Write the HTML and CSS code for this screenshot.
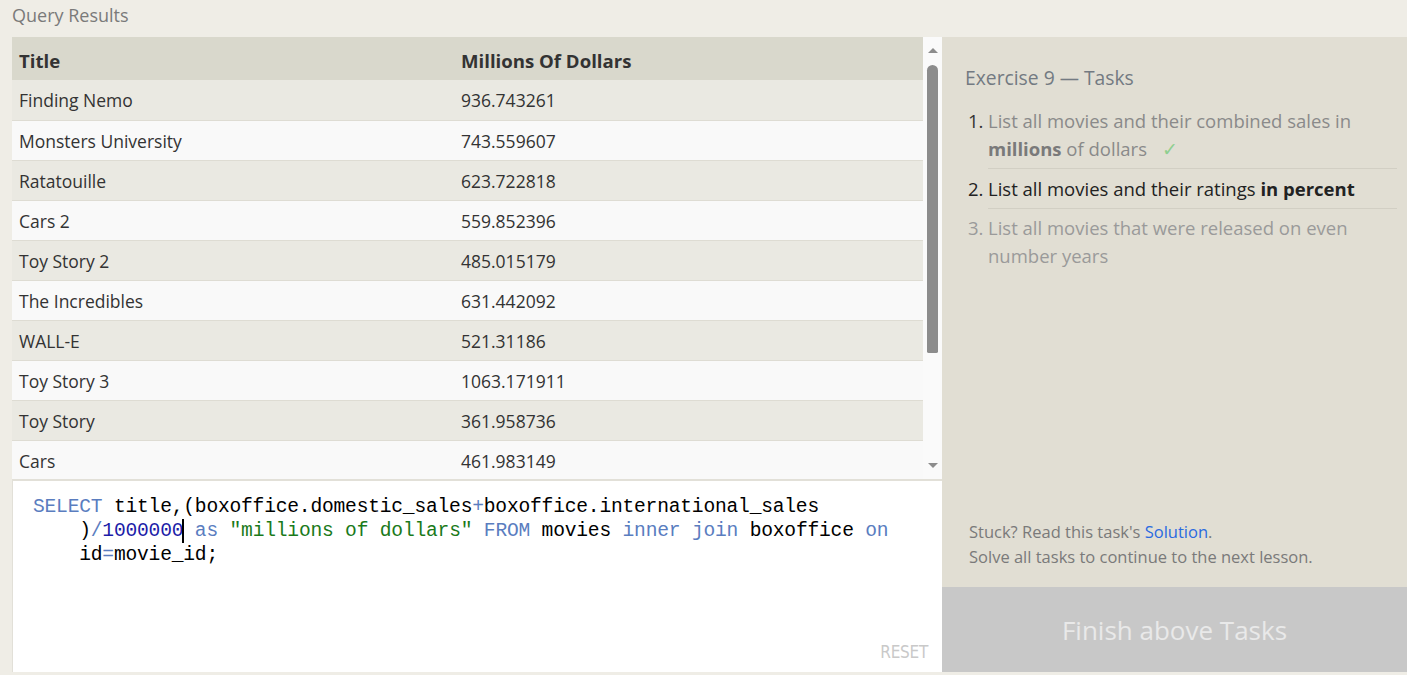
FILE: index.html
```html
<!DOCTYPE html>
<html>
<head>
<meta charset="utf-8">
<link rel="stylesheet" href="styles.css">
</head>
<body>
<div class="page">
  <div class="top-title">Query Results</div>
  <div class="main">
    <div class="left">
      <div class="results">
        <div class="table-wrap">
          <table class="results-table">
            <thead>
              <tr><th class="c1">Title</th><th>Millions Of Dollars</th></tr>
            </thead>
            <tbody>
              <tr><td>Finding Nemo</td><td>936.743261</td></tr>
              <tr><td>Monsters University</td><td>743.559607</td></tr>
              <tr><td>Ratatouille</td><td>623.722818</td></tr>
              <tr><td>Cars 2</td><td>559.852396</td></tr>
              <tr><td>Toy Story 2</td><td>485.015179</td></tr>
              <tr><td>The Incredibles</td><td>631.442092</td></tr>
              <tr><td>WALL-E</td><td>521.31186</td></tr>
              <tr><td>Toy Story 3</td><td>1063.171911</td></tr>
              <tr><td>Toy Story</td><td>361.958736</td></tr>
              <tr><td>Cars</td><td>461.983149</td></tr>
            </tbody>
          </table>
        </div>
        <div class="scrollbar">
          <div class="arrow up"></div>
          <div class="track"><div class="thumb"></div></div>
          <div class="arrow down"></div>
        </div>
      </div>
      <div class="editor">
        <div class="code"><span class="kw">SELECT</span> title,(boxoffice.domestic_sales<span class="op">+</span>boxoffice.international_sales
    )<span class="op">/</span><span class="num">1000000</span><span class="cursor"></span> <span class="kw">as</span> <span class="str">"millions of dollars"</span> <span class="kw">FROM</span> movies <span class="kw">inner</span> <span class="kw">join</span> boxoffice <span class="kw">on</span>
    id<span class="op">=</span>movie_id;</div>
        <div class="reset-row"><span class="reset">RESET</span></div>
      </div>
    </div>
    <div class="right">
      <div class="tasks">
        <h2 class="tasks-title">Exercise 9 — Tasks</h2>
        <ol class="task-list">
          <li class="task done"><span class="num-label">1.</span><span class="task-text">List all movies and their combined sales in <b>millions</b> of dollars <span class="check">✓</span></span></li>
          <li class="task current"><span class="num-label">2.</span><span class="task-text">List all movies and their ratings <b>in percent</b></span></li>
          <li class="task todo"><span class="num-label">3.</span><span class="task-text">List all movies that were released on even number years</span></li>
        </ol>
      </div>
      <div class="help">
        <p>Stuck? Read this task's <a class="link">Solution</a>.</p>
        <p>Solve all tasks to continue to the next lesson.</p>
      </div>
      <div class="finish">Finish above Tasks</div>
    </div>
  </div>
</div>
</body>
</html>
```
FILE: styles.css
```css
html, body {
  margin: 0;
  padding: 0;
}
body {
  background: #efede6;
  font-family: "Open Sans", "Noto Sans", sans-serif;
  color: #333;
  width: 1407px;
  height: 675px;
  overflow: hidden;
}
.page {
  display: flex;
  flex-direction: column;
  height: 675px;
}
.top-title {
  height: 37px;
  padding-left: 12px;
  font-size: 18px;
  line-height: 30px;
  color: #7a7a7a;
}
.main {
  display: flex;
  height: 635px;
  padding-left: 12px;
}
.left {
  width: 930px;
  display: flex;
  flex-direction: column;
}
.results {
  display: flex;
  height: 442px;
  border-bottom: 2px solid #e2e0d8;
  background: #fafafa;
}
.table-wrap {
  width: 911px;
  overflow: hidden;
}
.results-table {
  width: 100%;
  border-collapse: collapse;
  font-size: 17.5px;
}
.results-table th {
  background: #d9d8cc;
  text-align: left;
  height: 43px;
  padding: 4px 0 0 7px;
  box-sizing: border-box;
  font-weight: 700;
  font-size: 18.6px;
  color: #333;
}
.results-table th.c1 {
  width: 442px;
}
.results-table td {
  height: 40px;
  padding: 1px 0 0 7px;
  box-sizing: border-box;
  border-bottom: 1px solid #dedcd3;
  color: #333;
}
.results-table tbody tr:nth-child(odd) td {
  background: #eae9e2;
}
.results-table tbody tr:nth-child(even) td {
  background: #f9f9f9;
}
.scrollbar {
  width: 19px;
  background: #fafafa;
  display: flex;
  flex-direction: column;
  align-items: center;
}
.arrow {
  width: 0;
  height: 0;
  border-left: 5px solid transparent;
  border-right: 5px solid transparent;
}
.arrow.up {
  margin-top: 11px;
  border-bottom: 5px solid #8c8c8c;
}
.arrow.down {
  margin-bottom: 11px;
  border-top: 5px solid #8c8c8c;
}
.track {
  flex: 1;
  padding-top: 12px;
  width: 11px;
}
.thumb {
  width: 11px;
  height: 288px;
  background: #8c8c8c;
  border-radius: 6px 6px 2px 2px;
}
.editor {
  flex: 1;
  background: #fff;
  border-left: 1px solid #e2e0d8;
  display: flex;
  flex-direction: column;
}
.code {
  flex: 1;
  font-family: "Liberation Mono", monospace;
  font-size: 19.6px;
  letter-spacing: -0.2px;
  line-height: 24px;
  white-space: pre;
  padding: 14px 0 0 20px;
  color: #000;
}
.kw { color: #5a7dbf; }
.op { color: #5a7dbf; }
.num { color: #1c1ca8; }
.str { color: #1a7a1a; }
.cursor {
  display: inline-block;
  width: 2px;
  height: 24px;
  background: #000;
  vertical-align: top;
  margin-left: -1px;
  margin-right: -1px;
}
.reset-row {
  display: flex;
  justify-content: flex-end;
  padding: 0 14px 10px 0;
}
.reset {
  display: inline-block;
  font-family: "DejaVu Sans", sans-serif;
  font-size: 17px;
  color: #c9c9c9;
  transform: scaleX(0.9);
  transform-origin: right center;
  letter-spacing: -0.3px;
}
.right {
  width: 465px;
  background: #e1ded3;
  display: flex;
  flex-direction: column;
}
.tasks {
  flex: 1;
  padding: 26px 10px 0 23px;
}
.tasks-title {
  margin: 0 0 14px 0;
  font-size: 19.3px;
  font-weight: 400;
  color: #737a82;
  line-height: 30px;
}
.task-list {
  list-style: none;
  margin: 0;
  padding: 0 0 0 3px;
}
.task {
  display: flex;
  font-size: 18.5px;
  line-height: 28px;
}
.num-label {
  width: 20px;
  flex: none;
  text-align: left;
}
.task-text {
  flex: 1;
  padding-bottom: 5px;
  margin-bottom: 6px;
  border-bottom: 1px solid #d2cfc4;
}
.task.current .task-text {
  margin-bottom: 5px;
}
.task.todo .task-text {
  border-bottom: none;
}
.task.done .num-label { color: #333; }
.task.done .task-text { color: #8a8a8a; }
.task.done b { color: #7a7a7a; }
.check {
  color: #8fcf8f;
  margin-left: 10px;
}
.task.current { color: #222; }
.task.todo { color: #9a9a9a; }
.help {
  padding: 0 0 18px 27px;
  font-size: 16.5px;
  line-height: 25px;
  color: #7a7a7a;
}
.help p { margin: 0; }
.link { color: #2a6ae0; }
.finish {
  height: 85px;
  background: #c8c8c8;
  color: #e9e9e9;
  font-size: 26px;
  display: flex;
  align-items: center;
  justify-content: center;
}
```
